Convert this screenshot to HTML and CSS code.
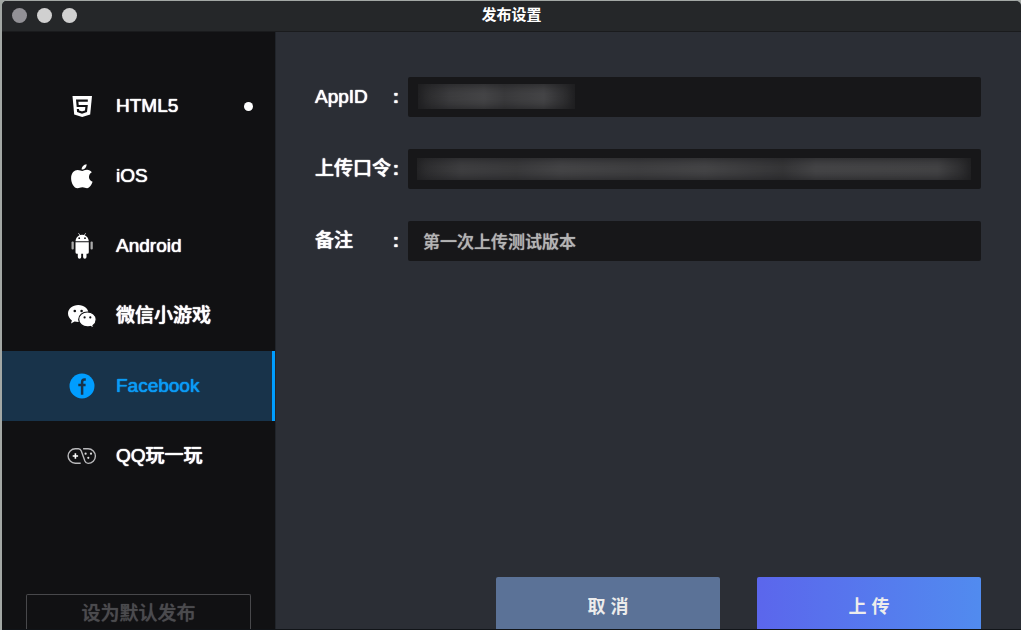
FILE: index.html
```html
<!DOCTYPE html>
<html lang="zh-CN">
<head>
<meta charset="utf-8">
<title>发布设置</title>
<link rel="stylesheet" href="styles.css">
</head>
<body>
<div class="window">
  <header class="titlebar">
    <div class="lights">
      <button class="light light-close" type="button" aria-label="关闭"></button>
      <button class="light" type="button" aria-label="最小化"></button>
      <button class="light" type="button" aria-label="缩放"></button>
    </div>
    <h1 class="title">发布设置</h1>
  </header>
  <div class="body">
    <aside class="sidebar">
      <nav class="nav">
        <a class="item" href="#html5">
          <svg class="icon" viewBox="0 0 30 30"><path fill="#fff" d="M5.500 5h19.500l-1.800 18.500-8 2.500-8-2.500z"/><path fill="none" stroke="#111113" stroke-width="2.200" d="M20.800 9.600H10.200l.5 5.400h8.900l-.6 5.200-4 1.400-3.900-1.400-.2-2.200"/></svg>
          <span class="name">HTML5</span><span class="dot"></span>
        </a>
        <a class="item" href="#ios">
          <svg class="icon" viewBox="0 0 30 30"><path fill="#fff" d="M19.600 3.200c.2 2.800-2 5.300-4.900 5.400-.3-2.600 2-5.100 4.900-5.400zM15.200 9.900c1.200 0 2.600-1.200 4.800-1.200 2 0 3.700 1 4.800 2.500-4.200 2.600-3.500 7.900.8 9.600-1 2.700-3 6.400-5.500 6.500-1.700 0-2.500-1-4.700-1s-3.100 1-4.800 1C7 27.400 4.100 21.800 4.100 17.200c0-5.600 3.300-8.300 6.500-8.300 2 0 3.500 1 4.600 1z"/></svg>
          <span class="name">iOS</span>
        </a>
        <a class="item" href="#android">
          <svg class="icon" viewBox="0 0 30 30"><g fill="#fff"><path d="M8.500 10.200c.2-3 1.800-5 4-6l-1.300-2 .5-.3L13.100 4a8 8 0 0 1 4 0l1.400-2.100.5.3-1.300 2c2.300 1 3.900 3 4.100 6zM8.500 11.200h13.300v10a1.500 1.500 0 0 1-1.500 1.500h-.8v3.300a1.700 1.700 0 0 1-3.400 0v-3.300h-1.900v3.300a1.700 1.700 0 0 1-3.400 0v-3.300H10a1.500 1.500 0 0 1-1.500-1.500z"/></g><g fill="#aaa"><rect x="4.500" y="10.500" width="2.300" height="8" rx="1"/><rect x="23.500" y="10.500" width="2.300" height="8" rx="1"/></g><circle cx="12.200" cy="7.200" r=".9" fill="#111113"/><circle cx="18" cy="7.200" r=".9" fill="#111113"/></svg>
          <span class="name">Android</span>
        </a>
        <a class="item" href="#wechat">
          <svg class="icon" viewBox="0 0 30 30"><path fill="#fff" d="M11.300 4C5.500 4 1 7.800 1 12.600c0 2.800 1.500 5.200 3.900 6.800l-.9 3 3.600-1.800c1.200.3 2.400.5 3.700.5 5.800 0 10.300-3.800 10.300-8.500S17.100 4 11.300 4z"/><path fill="#fff" stroke="#111113" stroke-width="1.200" d="M20.400 11c-4.800 0-8.700 3.300-8.700 7.400s3.900 7.500 8.700 7.500c1 0 2-.2 2.900-.4l3.500 1.900-.8-2.900c2-1.400 3.200-3.600 3.200-6.100 0-4.100-4-7.400-8.800-7.400z"/><g fill="#111113"><circle cx="7.800" cy="10" r="1.300"/><circle cx="14.600" cy="10" r="1.300"/><circle cx="17.600" cy="16.400" r="1.100"/><circle cx="23.300" cy="16.400" r="1.100"/></g></svg>
          <span class="name">微信小游戏</span>
        </a>
        <a class="item item-active" href="#facebook" aria-current="page">
          <svg class="icon" viewBox="0 0 30 30"><circle cx="15" cy="15" r="12.500" fill="#009dff"/><path fill="none" stroke="#18334a" stroke-width="2.500" d="M18.800 8.500h-1.300c-1.700 0-2.400.9-2.400 2.500v12.800M11.300 14h7.300"/></svg>
          <span class="name">Facebook</span>
        </a>
        <a class="item" href="#qq">
          <svg class="icon" viewBox="0 0 30 30"><g fill="none" stroke="#b9b9bb" stroke-width="1.400"><path d="M13.700 22.200H8.300a7.200 7.200 0 0 1 0-14.400h3.200c1.400 0 2.300.9 2.800 2.200l3.600 10c.6 1.500 1.700 2.400 3.200 2.400a7.200 7.200 0 0 0 0-14.600h-5"/></g><path stroke="#fff" stroke-width="1.600" d="M5.700 15h5.400M8.400 12.300v5.400"/><g fill="#ddd"><circle cx="18.600" cy="12.700" r="1.100"/><circle cx="24" cy="12.700" r="1.100"/><circle cx="21.300" cy="16.800" r="1.100"/></g></svg>
          <span class="name">QQ玩一玩</span>
        </a>
      </nav>
      <button class="default-btn" type="button">设为默认发布</button>
    </aside>
    <main class="main">
      <form class="form">
        <div class="field">
          <label class="label" for="appid"><span>AppID</span><span class="colon">:</span></label>
          <div class="control"><input class="input" id="appid" type="text"><span class="mask mask-short"></span></div>
        </div>
        <div class="field">
          <label class="label" for="token"><span>上传口令</span><span class="colon">:</span></label>
          <div class="control"><input class="input" id="token" type="text"><span class="mask mask-long"></span></div>
        </div>
        <div class="field">
          <label class="label" for="note"><span>备注</span><span class="colon">:</span></label>
          <div class="control"><input class="input" id="note" type="text" value="第一次上传测试版本"></div>
        </div>
      </form>
      <footer class="actions">
        <button class="btn btn-cancel" type="button">取 消</button>
        <button class="btn btn-upload" type="button">上 传</button>
      </footer>
    </main>
  </div>
</div>
</body>
</html>
```
FILE: styles.css
```css
* { box-sizing: border-box; }
body {
  margin: 0;
  background: #a3a8a5;
  color: #fff;
  font-family: "Liberation Sans", "Noto Sans CJK SC", sans-serif;
  font-size: 19px;
  font-weight: 500;
}
button, input { font: inherit; }
.window {
  display: flex;
  flex-direction: column;
  min-height: 100vh;
  border: solid #a3a8a5;
  border-width: 1px 0 0 2px;
  border-radius: 6px 6px 0 0;
  background: #2b2e35;
}
.titlebar {
  display: grid;
  grid-template-columns: 1fr auto 1fr;
  align-items: center;
  height: 31px;
  padding: 0 10px 2px;
  border-bottom: 1px solid #1a1b1d;
  border-radius: 5px 5px 0 0;
  background: #252729;
}
.lights { display: flex; gap: 10px; }
.light {
  width: 15px;
  height: 15px;
  padding: 0;
  border: 0;
  border-radius: 50%;
  background: #d0d0d0;
}
.light-close { background: #929196; }
.title { margin: 0; font-size: 15px; font-weight: 700; line-height: 20px; }
.body { display: flex; flex: 1; border-bottom: 1px solid #111418; }
.sidebar {
  display: flex;
  flex-direction: column;
  justify-content: space-between;
  flex: 0 0 274px;
  padding-top: 39px;
  border-right: 1px solid #20242a;
  background: #111113;
}
.item {
  display: flex;
  align-items: center;
  height: 70px;
  padding: 0 22px 0 65px;
  color: #fff;
  text-decoration: none;
}
.item-active {
  border-right: 3px solid #009dff;
  background: #18334a;
  color: #0b9bf5;
}
.icon { flex: none; width: 30px; height: 30px; margin-right: 19px; }
.name {
  flex: 1;
  line-height: 28px;
  text-shadow: 0 0 1px currentColor, 0 0 1px currentColor;
}
.dot { width: 9px; height: 9px; border-radius: 50%; background: #fff; }
.default-btn {
  height: 35px;
  margin: 0 24px;
  padding: 4px 0 0;
  border: 1px solid #48484b;
  border-bottom: 0;
  border-radius: 2px 2px 0 0;
  background: transparent;
  color: #4b4b4e;
  line-height: 28px;
  text-shadow: 0 0 1px currentColor;
}
.main {
  display: flex;
  flex: 1;
  flex-direction: column;
  justify-content: space-between;
  min-width: 0;
  padding: 45px 40px 0 39px;
}
.form { display: flex; flex-direction: column; gap: 32px; }
.field { display: flex; gap: 9px; }
.label {
  display: flex;
  flex: 0 0 84px;
  justify-content: space-between;
  line-height: 40px;
  text-shadow: 0 0 1px currentColor, 0 0 1px currentColor;
}
.colon { font-weight: 700; }
.control { position: relative; flex: 1; }
.input {
  display: block;
  width: 100%;
  height: 40px;
  padding: 0 15px 2px;
  border: 0;
  border-radius: 2px;
  outline: 0;
  background: #171719;
  color: #b4b4b4;
  font-size: 17px;
  text-shadow: 0 0 1px currentColor;
}
.mask { position: absolute; pointer-events: none; box-shadow: inset 0 0 12px #1d1d1f; }
.mask-short {
  top: 7px;
  left: 10px;
  width: 157px;
  height: 25px;
  background: linear-gradient(90deg, #252527, #3d3d3f 20%, #464648 42%, #3b3b3d 55%, #464648 80%, #232325);
}
.mask-long {
  top: 9px;
  right: 10px;
  left: 9px;
  height: 22px;
  background: linear-gradient(90deg, #2a2a2c, #404042 8%, #3b3b3d 18%, #464648 26%, #404042 40%, #464648 52%, #363638 66%, #464648 72%, #444446 94%, #262628);
}
.actions { display: flex; justify-content: flex-end; gap: 37px; }
.btn {
  width: 224px;
  height: 52px;
  padding: 3px 0 0;
  border: 0;
  border-radius: 2px 2px 0 0;
  color: #ececec;
  font-size: 18px;
  font-weight: 700;
}
.btn-cancel { background: #5b7297; }
.btn-upload { background: linear-gradient(90deg, #5b66ec, #518bef); }
```
